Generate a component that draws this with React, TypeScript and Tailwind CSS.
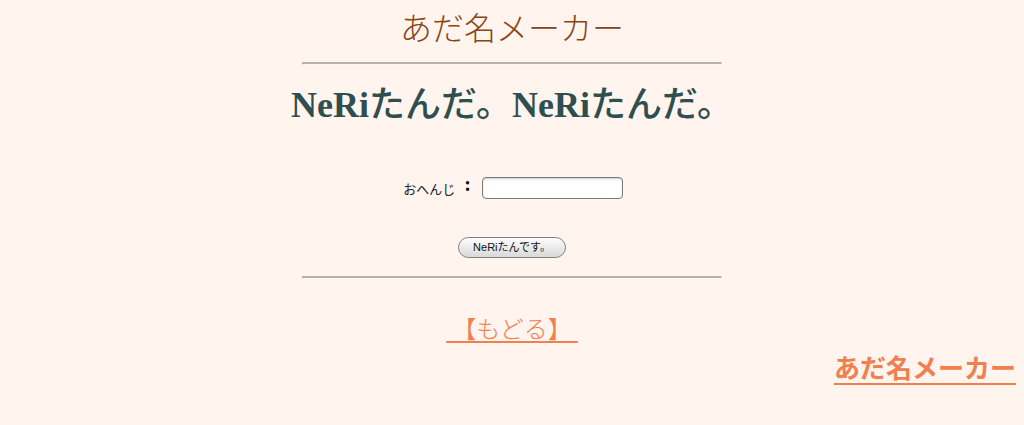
import React from "react";

const serif = { fontFamily: '"Liberation Serif", "Noto Sans CJK JP", serif' };

function Hr() {
  return (
    <div className="w-[420px] h-[3px] border-t-[2px] border-l border-t-[#b9b0ab] border-l-[#b9b0ab] border-b border-b-[#fbf8f6] border-r border-r-[#fbf8f6]" />
  );
}

export default function App() {
  return (
    <div className="w-[1024px] h-[425px] bg-[#fff4ee] flex flex-col items-center overflow-hidden" style={serif}>
      <div className="h-[57px] flex items-center justify-center text-[32px] leading-none text-[#8b4513] font-light pt-[1px]">
        あだ名メーカー
      </div>
      <div className="mt-[5px]">
        <Hr />
      </div>
      <div className="mt-[20px] h-[40px] flex items-center text-[36px] leading-none text-[#2f4f4f] whitespace-nowrap">
        <span className="font-bold">NeRi</span>
        <span className="font-medium">たんだ。</span>
        <span className="font-bold">NeRi</span>
        <span className="font-medium">たんだ。</span>
      </div>
      <div className="mt-[52px] h-[22px] flex items-center ml-[2px]">
        <span className="text-[13px] text-[#222] mt-[3px]">おへんじ</span>
        <span className="text-[20px] font-bold text-[#111] ml-[9px] mr-[11px] mt-[-8px] leading-none">:</span>
        <div className="w-[141px] h-[22px] bg-white border border-[#7a7a7a] rounded-[4px] shadow-[inset_0_1px_2px_rgba(0,0,0,0.2)]" />
      </div>
      <div className="mt-[38px]">
        <button
          className="w-[108px] h-[21px] rounded-full border border-[#808080] bg-gradient-to-b from-[#fdfdfd] to-[#d9d9d9] text-[11px] text-[#111] flex items-center justify-center leading-none"
          style={{ fontFamily: '"Liberation Sans", "Noto Sans CJK JP", sans-serif' }}
        >
          NeRiたんです。
        </button>
      </div>
      <div className="mt-[18px]">
        <Hr />
      </div>
      <div className="mt-[34px] h-[34px] flex items-center">
        <a className="text-[24px] leading-none text-[#f0804f] underline underline-offset-[3px] decoration-[2px] font-light cursor-pointer whitespace-pre">
          {"\u00a0【もどる】\u00a0"}
        </a>
      </div>
      <div className="mt-[10px] w-full flex justify-end pr-[8px]">
        <a className="text-[26px] leading-none text-[#f0804f] underline underline-offset-[5px] decoration-[2px] font-bold cursor-pointer">
          あだ名メーカー
        </a>
      </div>
    </div>
  );
}
